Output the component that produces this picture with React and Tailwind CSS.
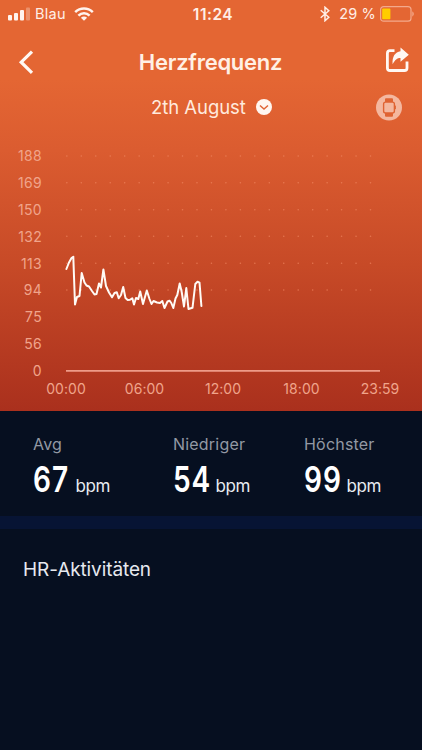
import React from "react";

const levels = [188, 169, 150, 132, 113, 94, 75, 56, 0];
const times = ["00:00", "06:00", "12:00", "18:00", "23:59"];
const dotRows = [15.7, 42.4, 69.4, 96, 123, 149.8];

function StatusBar() {
  return (
    <div className="flex h-7 items-center text-[14.5px] text-[#ffeee6]">
      <div className="flex flex-1 items-center pl-2">
        <svg width="23" height="14" viewBox="0 0 23 14" fill="#fff4ee">
          <rect x="0" y="8" width="4" height="5.5" rx="1" />
          <rect x="6" y="6" width="4" height="7.5" rx="1" />
          <rect x="12" y="3" width="4" height="10.5" rx="1" />
          <rect x="18" y="0.5" width="4" height="13" rx="1" opacity="0.3" />
        </svg>
        <span className="ml-[4px] tracking-[0.3px]">Blau</span>
        <svg className="ml-[8px] -mt-px" width="20" height="14" viewBox="0 0 20 14" fill="none" stroke="#fff4ee" strokeWidth="2.5">
          <path d="M1.2 5.2C6.2 0.3 13.8 0.3 18.8 5.2" />
          <path d="M4.4 8.6C7.6 5.5 12.4 5.5 15.6 8.6" />
          <path d="M6.9 10.8C8.7 9.2 11.3 9.2 13.1 10.8L10 13.8Z" fill="#fff4ee" stroke="none" />
        </svg>
      </div>
      <span className="ml-[3px] mt-px text-[15.5px] font-semibold tracking-[0.5px]">11:24</span>
      <div className="flex flex-1 items-center justify-end pr-[7px]">
        <svg width="10" height="16" viewBox="0 0 10 16" fill="none" stroke="#fff0e8" strokeWidth="1.5">
          <path d="M0.7 4.3L8.8 11.2L5 14.7V1.3L8.8 4.8L0.7 11.7" />
        </svg>
        <span className="ml-[9px] tracking-[0.15px]">29 %</span>
        <svg className="ml-[4px]" width="35" height="16" viewBox="0 0 35 16">
          <rect x="0.6" y="0.6" width="30.4" height="14.6" rx="3" fill="none" stroke="#f3a98c" strokeWidth="1.2" />
          <rect x="2.2" y="2.6" width="8.2" height="10.6" rx="0.8" fill="#ffcc00" />
          <path d="M32.3 5.3Q35.3 8 32.3 10.7Z" fill="#f3a98c" />
        </svg>
      </div>
    </div>
  );
}

function Header() {
  return (
    <div className="flex h-[68px] items-center justify-between pl-[18px] pr-[12px]">
      <svg width="25" height="26" viewBox="0 0 25 26" fill="none" stroke="#fff8f3" strokeWidth="3.2">
        <path d="M14 2.6L3.2 13.2L14 23.8" />
      </svg>
      <h1 className="-ml-[7px] text-[22px] font-semibold tracking-[-0.25px] text-[#fff0e5]">Herzfrequenz</h1>
      <svg className="-mt-[4px]" width="25" height="26" viewBox="0 0 25 26">
        <path d="M9.5 3.6H5Q2.4 3.6 2.4 6.2V20.9Q2.4 23.5 5 23.5H19.4Q22 23.5 22 20.9V14.6" fill="none" stroke="#fff8f3" strokeWidth="2.8" />
        <path d="M15.5 0.4L23.8 7.7L15.5 14.8V10.9C12.2 10.9 10 12.7 7.6 17.2C7 9.6 10.2 5 15.5 4.3Z" fill="#fff8f3" />
      </svg>
    </div>
  );
}

function DateRow() {
  return (
    <div className="-mt-[4px] flex h-[30px] items-center pl-[151px] pr-[20px]">
      <span className="mt-[2px] text-[18.5px] tracking-[-0.05px] text-[#ffeadd]">2th August</span>
      <svg className="ml-[10px]" width="16" height="16" viewBox="0 0 16 16">
        <circle cx="8" cy="8" r="8" fill="#fff6f0" />
        <path d="M4 6.4L8 10L12 6.4" fill="none" stroke="#df6333" strokeWidth="1.4" />
      </svg>
      <svg className="ml-auto" width="26" height="27" viewBox="0 0 26 27">
        <circle cx="13" cy="13.5" r="13" fill="#f4b79f" />
        <rect x="9" y="4.2" width="8" height="4.6" rx="1" fill="#df6333" />
        <rect x="9" y="18.2" width="8" height="4.6" rx="1" fill="#df6333" />
        <rect x="7.6" y="8.1" width="10.8" height="10.8" rx="2" fill="#f4b79f" stroke="#df6333" strokeWidth="1.4" />
        <rect x="18.8" y="11.6" width="1.1" height="3.6" fill="#df6333" />
      </svg>
    </div>
  );
}

function Chart() {
  return (
    <div className="mt-[18px] text-[14px] text-[#f0a48b]">
      <div className="flex h-[236px]">
        <div className="mt-[2.9px] flex w-[42px] flex-col text-right tracking-[0.3px]">
          {levels.map((n) => (
            <span key={n} className="flex h-[26.83px] shrink-0 items-center justify-end leading-none">
              {n}
            </span>
          ))}
        </div>
        <svg className="ml-[23px]" width="330" height="236" viewBox="65 140 330 236" fill="none">
          {dotRows.map((y) => (
            <line key={y} x1="66.8" x2="371" y1={y + 140.3} y2={y + 140.3} stroke="#f18862" strokeOpacity="0.65" strokeWidth="1.5" strokeLinecap="round" strokeDasharray="0.1 14.36" />
          ))}
          <path d="M66 370.8H380" stroke="#ee9b88" strokeWidth="1.7" />
          <path
            d="M66.4 269L69 262.5L71.5 258L73.3 256.7L75 304.5L77 297L79.5 296L81.7 273L84.5 282.5L86.5 285.5L89 286.5L92 291L94.5 294.5L96.5 294L99 283.5L101 287.5L103.4 269.5L106 286L109 292.5L112 297.3L114.5 293L116.8 292.3L118.7 298.3L121 295L123.2 287L125.5 298L127.7 300L130 299.8L132.3 298.2L134 304.5L136 298L138.3 299L140.2 291.5L143 304L146.8 290.5L149.5 299L151.5 304L153.5 301L157 302.5L160 303L162.3 301L164.5 308L167.5 301.5L169.5 300.7L171.3 303L173.3 308L175.5 298.5L177.3 295L179.7 283.5L181.7 292L184 306.5L186.3 288L188.5 309L192.5 307.8L195.3 284L197.5 281.7L199.5 282.7L201.4 306"
            stroke="#fffaf5"
            strokeWidth="2"
            strokeLinejoin="round"
            strokeLinecap="round"
          />
        </svg>
      </div>
      <div className="flex h-[25px] items-center justify-between pl-[46.5px] pr-[22.5px] tracking-[0.05px]">
        {times.map((t) => (
          <span key={t} className="flex w-[39px] justify-center leading-none">{t}</span>
        ))}
      </div>
    </div>
  );
}

function Stat({ label, value }) {
  return (
    <div>
      <div className="text-base leading-6 tracking-[0.2px] text-[#9399a4]">{label}</div>
      <div className="-mt-px flex h-12 items-center">
        <div className="w-[42.5px]">
          <span className="inline-block origin-left scale-x-[0.78] text-[36px] font-semibold leading-none tracking-[1.2px] text-white">
            {value}
          </span>
        </div>
        <span className="mt-[14px] text-[17px] leading-none tracking-[-0.4px] text-[#e8ebf0]">bpm</span>
      </div>
    </div>
  );
}

export default function App() {
  return (
    <main className="h-[750px] w-[422px] overflow-hidden bg-[#060f20] font-[Inter,'Liberation_Sans',sans-serif]">
      <section className="h-[411px] bg-[linear-gradient(#e46633_0px,#e46633_80px,#db5c30_150px,#c74a27_265px,#aa301d_411px)]">
        <StatusBar />
        <Header />
        <DateRow />
        <Chart />
      </section>
      <section className="grid h-[105px] grid-cols-[140px_131px_1fr] pl-[33px] pt-[21px]">
        <Stat label="Avg" value="67" />
        <Stat label="Niedriger" value="54" />
        <Stat label="Höchster" value="99" />
      </section>
      <div className="h-[13px] bg-[#071434]" />
      <section className="px-[23px] pt-[28px]">
        <h2 className="text-[19px] leading-[26px] tracking-[-0.1px] text-[#e6e9ef]">HR-Aktivitäten</h2>
      </section>
    </main>
  );
}
